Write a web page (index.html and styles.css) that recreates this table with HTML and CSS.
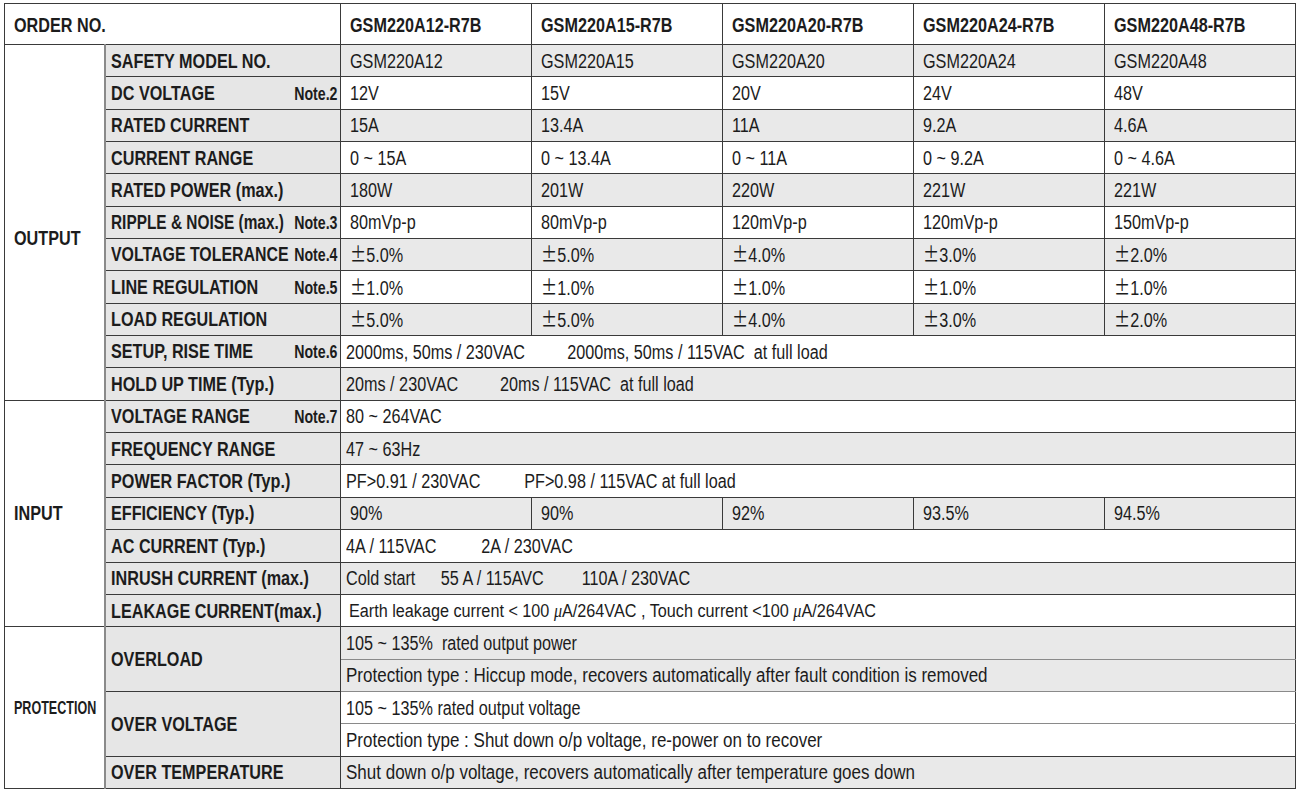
FILE: index.html
```html
<!DOCTYPE html>
<html>
<head>
<meta charset="utf-8">
<link rel="stylesheet" href="styles.css">
</head>
<body>
<table class="spec">
  <colgroup>
    <col class="c-group"><col class="c-label"><col class="c-val"><col class="c-val"><col class="c-val"><col class="c-val"><col class="c-val">
  </colgroup>
  <tr class="head">
    <td colspan="2" class="order"><span class="n">ORDER NO.</span></td>
    <td class="model"><span class="n">GSM220A12-R7B</span></td>
    <td class="model"><span class="n">GSM220A15-R7B</span></td>
    <td class="model"><span class="n">GSM220A20-R7B</span></td>
    <td class="model"><span class="n">GSM220A24-R7B</span></td>
    <td class="model"><span class="n">GSM220A48-R7B</span></td>
  </tr>
  <tr class="g">
    <td rowspan="11" class="group out"><span class="n">OUTPUT</span></td>
    <td class="lbl"><div class="lb"><span class="lt">SAFETY MODEL NO.</span></div></td>
    <td class="v"><span class="n">GSM220A12</span></td><td class="v"><span class="n">GSM220A15</span></td><td class="v"><span class="n">GSM220A20</span></td><td class="v"><span class="n">GSM220A24</span></td><td class="v"><span class="n">GSM220A48</span></td>
  </tr>
  <tr>
    <td class="lbl"><div class="lb"><span class="lt">DC VOLTAGE</span><span class="note">Note.2</span></div></td>
    <td class="v"><span class="n">12V</span></td><td class="v"><span class="n">15V</span></td><td class="v"><span class="n">20V</span></td><td class="v"><span class="n">24V</span></td><td class="v"><span class="n">48V</span></td>
  </tr>
  <tr class="g">
    <td class="lbl"><div class="lb"><span class="lt">RATED CURRENT</span></div></td>
    <td class="v"><span class="n">15A</span></td><td class="v"><span class="n">13.4A</span></td><td class="v"><span class="n">11A</span></td><td class="v"><span class="n">9.2A</span></td><td class="v"><span class="n">4.6A</span></td>
  </tr>
  <tr>
    <td class="lbl"><div class="lb"><span class="lt">CURRENT RANGE</span></div></td>
    <td class="v"><span class="n">0 ~ 15A</span></td><td class="v"><span class="n">0 ~ 13.4A</span></td><td class="v"><span class="n">0 ~ 11A</span></td><td class="v"><span class="n">0 ~ 9.2A</span></td><td class="v"><span class="n">0 ~ 4.6A</span></td>
  </tr>
  <tr class="g">
    <td class="lbl"><div class="lb"><span class="lt">RATED POWER (max.)</span></div></td>
    <td class="v"><span class="n">180W</span></td><td class="v"><span class="n">201W</span></td><td class="v"><span class="n">220W</span></td><td class="v"><span class="n">221W</span></td><td class="v"><span class="n">221W</span></td>
  </tr>
  <tr>
    <td class="lbl"><div class="lb"><span class="lt tight">RIPPLE &amp; NOISE (max.)</span><span class="note">Note.3</span></div></td>
    <td class="v"><span class="n">80mVp-p</span></td><td class="v"><span class="n">80mVp-p</span></td><td class="v"><span class="n">120mVp-p</span></td><td class="v"><span class="n">120mVp-p</span></td><td class="v"><span class="n">150mVp-p</span></td>
  </tr>
  <tr class="g">
    <td class="lbl"><div class="lb"><span class="lt tight2">VOLTAGE TOLERANCE</span><span class="note">Note.4</span></div></td>
    <td class="v pm"><span class="n"><b>±</b>5.0%</span></td><td class="v pm"><span class="n"><b>±</b>5.0%</span></td><td class="v pm"><span class="n"><b>±</b>4.0%</span></td><td class="v pm"><span class="n"><b>±</b>3.0%</span></td><td class="v pm"><span class="n"><b>±</b>2.0%</span></td>
  </tr>
  <tr>
    <td class="lbl"><div class="lb"><span class="lt">LINE REGULATION</span><span class="note">Note.5</span></div></td>
    <td class="v pm"><span class="n"><b>±</b>1.0%</span></td><td class="v pm"><span class="n"><b>±</b>1.0%</span></td><td class="v pm"><span class="n"><b>±</b>1.0%</span></td><td class="v pm"><span class="n"><b>±</b>1.0%</span></td><td class="v pm"><span class="n"><b>±</b>1.0%</span></td>
  </tr>
  <tr class="g">
    <td class="lbl"><div class="lb"><span class="lt">LOAD REGULATION</span></div></td>
    <td class="v pm"><span class="n"><b>±</b>5.0%</span></td><td class="v pm"><span class="n"><b>±</b>5.0%</span></td><td class="v pm"><span class="n"><b>±</b>4.0%</span></td><td class="v pm"><span class="n"><b>±</b>3.0%</span></td><td class="v pm"><span class="n"><b>±</b>2.0%</span></td>
  </tr>
  <tr>
    <td class="lbl"><div class="lb"><span class="lt">SETUP, RISE TIME</span><span class="note">Note.6</span></div></td>
    <td colspan="5" class="w"><span class="n"><span class="p1">2000ms, 50ms / 230VAC</span><span>2000ms, 50ms / 115VAC &nbsp;at full load</span></span></td>
  </tr>
  <tr class="g">
    <td class="lbl"><div class="lb"><span class="lt">HOLD UP TIME (Typ.)</span></div></td>
    <td colspan="5" class="w"><span class="n"><span class="p2">20ms / 230VAC</span><span>20ms / 115VAC &nbsp;at full load</span></span></td>
  </tr>
  <tr>
    <td rowspan="7" class="group"><span class="n">INPUT</span></td>
    <td class="lbl"><div class="lb"><span class="lt">VOLTAGE RANGE</span><span class="note">Note.7</span></div></td>
    <td colspan="5" class="w"><span class="n">80 ~ 264VAC</span></td>
  </tr>
  <tr class="g">
    <td class="lbl"><div class="lb"><span class="lt">FREQUENCY RANGE</span></div></td>
    <td colspan="5" class="w"><span class="n">47 ~ 63Hz</span></td>
  </tr>
  <tr>
    <td class="lbl"><div class="lb"><span class="lt">POWER FACTOR (Typ.)</span></div></td>
    <td colspan="5" class="w"><span class="n"><span class="p3">PF&gt;0.91 / 230VAC</span><span>PF&gt;0.98 / 115VAC at full load</span></span></td>
  </tr>
  <tr class="g">
    <td class="lbl"><div class="lb"><span class="lt">EFFICIENCY (Typ.)</span></div></td>
    <td class="v"><span class="n">90%</span></td><td class="v"><span class="n">90%</span></td><td class="v"><span class="n">92%</span></td><td class="v"><span class="n">93.5%</span></td><td class="v"><span class="n">94.5%</span></td>
  </tr>
  <tr>
    <td class="lbl"><div class="lb"><span class="lt">AC CURRENT (Typ.)</span></div></td>
    <td colspan="5" class="w"><span class="n"><span class="p4">4A / 115VAC</span><span>2A / 230VAC</span></span></td>
  </tr>
  <tr class="g">
    <td class="lbl"><div class="lb"><span class="lt">INRUSH CURRENT (max.)</span></div></td>
    <td colspan="5" class="w"><span class="n"><span class="p5">Cold start</span><span class="p6">55 A / 115AVC</span><span>110A / 230VAC</span></span></td>
  </tr>
  <tr>
    <td class="lbl"><div class="lb"><span class="lt">LEAKAGE CURRENT(max.)</span></div></td>
    <td colspan="5" class="w small"><span class="n">Earth leakage current &lt; 100 <i>μ</i>A/264VAC , Touch current &lt;100 <i>μ</i>A/264VAC</span></td>
  </tr>
  <tr class="g">
    <td rowspan="5" class="group prot"><span class="n">PROTECTION</span></td>
    <td rowspan="2" class="lbl"><div class="lb"><span class="lt">OVERLOAD</span></div></td>
    <td colspan="5" class="w sub"><span class="n">105 ~ 135% &nbsp;rated output power</span></td>
  </tr>
  <tr class="g">
    <td colspan="5" class="w s"><span class="n">Protection type : Hiccup mode, recovers automatically after fault condition is removed</span></td>
  </tr>
  <tr>
    <td rowspan="2" class="lbl"><div class="lb"><span class="lt">OVER VOLTAGE</span></div></td>
    <td colspan="5" class="w sub"><span class="n">105 ~ 135% rated output voltage</span></td>
  </tr>
  <tr>
    <td colspan="5" class="w s"><span class="n">Protection type : Shut down o/p voltage, re-power on to recover</span></td>
  </tr>
  <tr class="g">
    <td class="lbl"><div class="lb"><span class="lt">OVER TEMPERATURE</span></div></td>
    <td colspan="5" class="w s"><span class="n">Shut down o/p voltage, recovers automatically after temperature goes down</span></td>
  </tr>
</table>
</body>
</html>
```

FILE: styles.css
```css
html, body {
  margin: 0;
  padding: 0;
  background: #fff;
}
body {
  padding: 3px 0 0 4px;
  font-family: "Liberation Sans", Arial, sans-serif;
  color: #1c1c1c;
}
.spec {
  border-collapse: collapse;
  table-layout: fixed;
  width: 1291px;
}
.c-group { width: 100px; }
.c-label { width: 236px; }
.c-val { width: 191px; }
.spec td {
  border: 1px solid #3a3a3a;
  padding: 0;
  height: 31.35px;
  vertical-align: middle;
  white-space: nowrap;
  overflow: hidden;
  font-size: 20px;
  line-height: 22px;
}
/* narrow rendering of text (Arial Narrow look) */
.n, .lt, .note {
  display: inline-block;
  transform: scaleX(0.81);
  transform-origin: 0 50%;
}
.spec tr.head td {
  height: 38px;
  font-weight: bold;
  padding-top: 2px;
}
.order { padding-left: 9px !important; }
.model { padding-left: 9px !important; }
.spec tr.g td { background: #e9e9e9; }
.spec td.group {
  background: #fff !important;
  font-weight: bold;
  padding-left: 9px;
}
.spec td.out .n { position: relative; top: 16px; }
.spec td.prot { font-size: 19px; }
.spec td.prot .n { transform: scaleX(0.66); }
.spec td.lbl {
  background: #e6e6e6 !important;
  border-left: 2px solid #8a8a8a;
  font-weight: bold;
}
.lb {
  display: flex;
  align-items: baseline;
  padding: 0 3px 0 5px;
}
.lt {
  flex: 1 1 0;
  min-width: 0;
}
.lt.tight { transform: scaleX(0.77); }
.lt.tight2 { transform: scaleX(0.795); }
.note {
  flex: none;
  font-size: 17.5px;
  transform-origin: 100% 50%;
}
.v { padding-left: 9px !important; }
.v.pm { padding-left: 9px !important; }
.pm b {
  font-weight: normal;
  font-family: "Noto Sans CJK SC", sans-serif;
  font-size: 20px;
}
.w { padding-left: 5px !important; }
.w.s .n { transform: scaleX(0.85); }
.w.small { font-size: 18px; padding-left: 8px !important; }
.w.small .n { transform: scaleX(0.9); }
.w.small i { font-family: "Liberation Serif", serif; }
.spec tr.g + tr.g td.w, .spec td.w.sub { border-bottom-color: #8a8a8a; }
.p1 { display: inline-block; width: 273px; }
.p2 { display: inline-block; width: 190px; }
.p3 { display: inline-block; width: 220px; }
.p4 { display: inline-block; width: 167px; }
.p5 { display: inline-block; width: 117px; }
.p6 { display: inline-block; width: 174px; }
```
